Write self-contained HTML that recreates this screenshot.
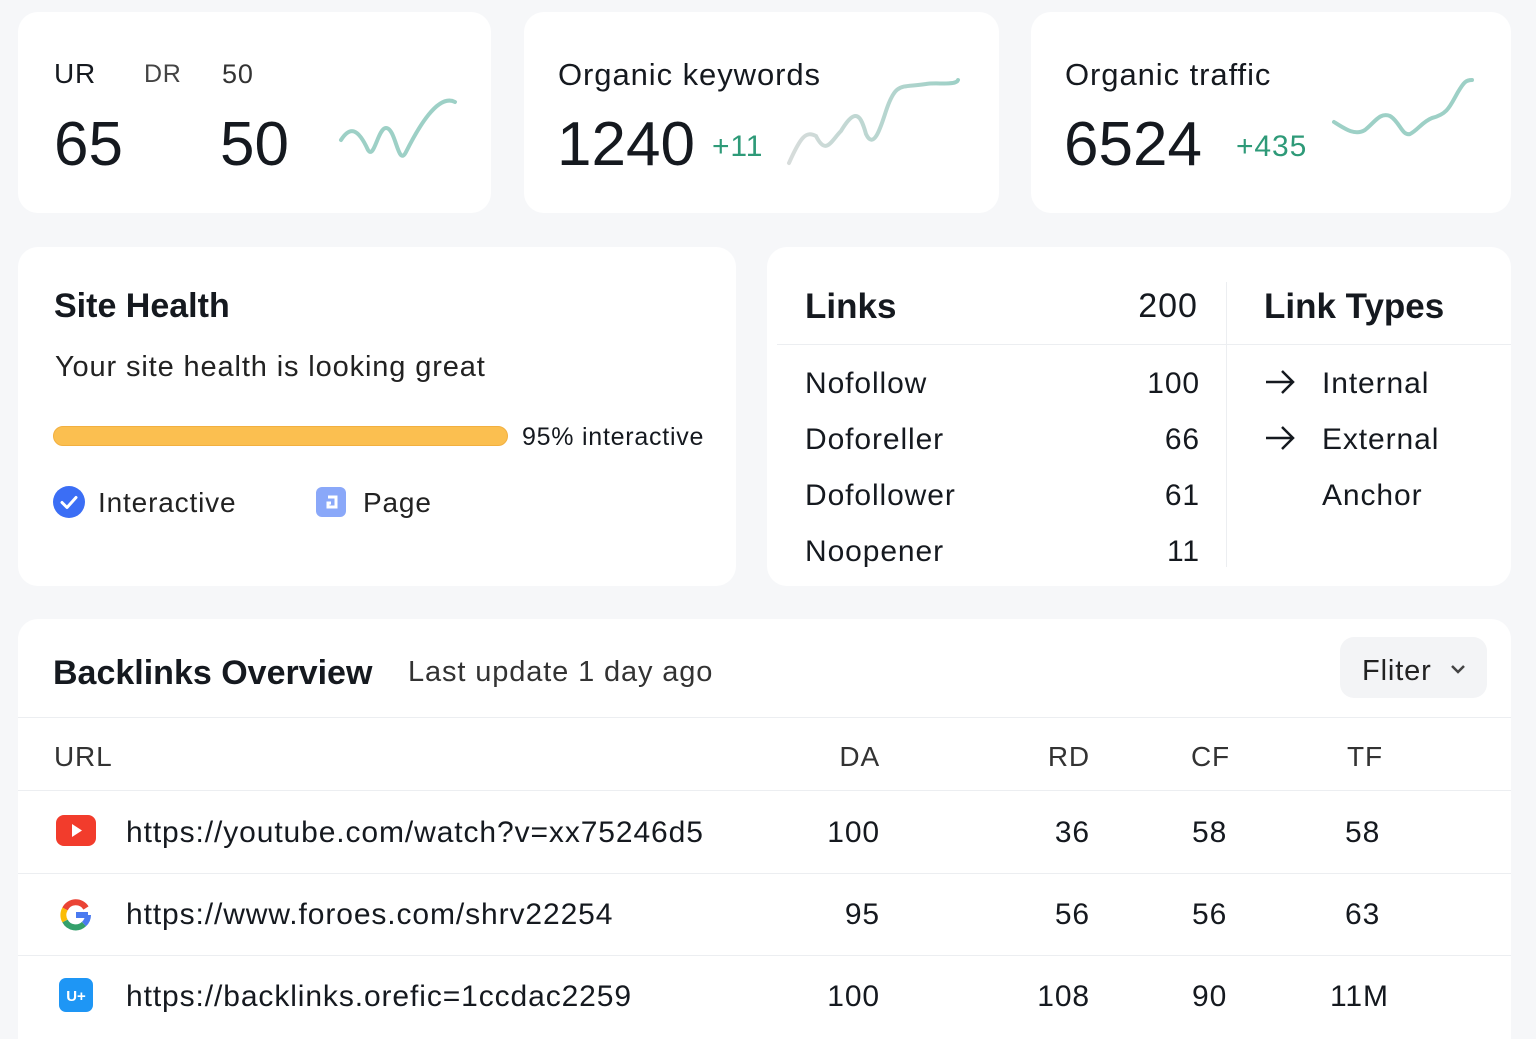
<!DOCTYPE html>
<html><head><meta charset="utf-8"><style>
*{margin:0;padding:0;box-sizing:border-box}
body{width:1536px;height:1024px;background:#f6f7f9;position:relative;overflow:hidden;font-family:"Liberation Sans",sans-serif;color:#15191f}
.card{position:absolute;background:#fff;border-radius:20px}
.t{position:absolute;line-height:1;white-space:nowrap;transform:translateY(3px);letter-spacing:0.03em}
.n{letter-spacing:0}
.b{font-weight:bold;letter-spacing:0}
.r{text-align:right}
.hl{position:absolute;height:1px;background:#eceef1}
</style></head><body>
<div class="card" style="left:18px;top:12px;width:473px;height:201px"></div>
<div class="card" style="left:524px;top:12px;width:475px;height:201px"></div>
<div class="card" style="left:1031px;top:12px;width:480px;height:201px"></div>
<div class="card" style="left:18px;top:247px;width:718px;height:339px"></div>
<div class="card" style="left:767px;top:247px;width:744px;height:339px"></div>
<div class="card" style="left:18px;top:619px;width:1493px;height:420px;border-radius:20px 20px 0 0"></div>

<div class="t" style="left:54px;top:57px;font-size:28px">UR</div>
<div class="t" style="left:144px;top:59px;font-size:25px;color:#444">DR</div>
<div class="t" style="left:222px;top:58px;font-size:27px;color:#333">50</div>
<div class="t n" style="left:54px;top:111px;font-size:62px">65</div>
<div class="t n" style="left:220px;top:111px;font-size:62px">50</div>
<svg style="position:absolute;left:338px;top:98px" width="122" height="64"><path d="M3 42 C12 28 20 30 30 52 C36 62 40 30 48 30 C58 30 60 70 68 54 C80 30 100 -5 117 4" fill="none" stroke="#9dd0c6" stroke-width="4" stroke-linecap="round"/></svg>

<div class="t" style="left:558px;top:56px;font-size:31px">Organic keywords</div>
<div class="t n" style="left:557px;top:111px;font-size:62px">1240</div>
<div class="t" style="left:712px;top:129px;font-size:30px;color:#2e9a78">+11</div>
<svg style="position:absolute;left:786px;top:76px" width="178" height="92"><defs><linearGradient id="g1" x1="0" x2="1"><stop offset="0" stop-color="#d7dcdb"/><stop offset="1" stop-color="#9dd0c6"/></linearGradient></defs><path d="M3 87 C15 60 20 55 30 60 C40 80 45 65 55 55 C70 30 75 40 80 58 C88 75 95 50 100 35 C110 5 115 12 140 8 C150 6 170 10 172 4" fill="none" stroke="url(#g1)" stroke-width="4" stroke-linecap="round"/></svg>

<div class="t" style="left:1065px;top:56px;font-size:31px">Organic traffic</div>
<div class="t n" style="left:1064px;top:111px;font-size:62px">6524</div>
<div class="t" style="left:1236px;top:129px;font-size:30px;color:#2e9a78">+435</div>
<svg style="position:absolute;left:1330px;top:74px" width="144" height="70"><path d="M4 48 C15 55 25 62 35 56 C45 48 50 38 60 42 C70 48 72 62 80 60 C88 56 92 48 102 44 C118 40 120 32 128 18 C134 8 136 6 142 6" fill="none" stroke="#9dd0c6" stroke-width="4" stroke-linecap="round"/></svg>

<div class="t b" style="left:54px;top:286px;font-size:34px">Site Health</div>
<div class="t" style="left:55px;top:350px;font-size:29px;color:#222">Your site health is looking great</div>
<div style="position:absolute;left:53px;top:426px;width:455px;height:20px;background:#fbbf50;border-radius:10px;border:1px solid #f2b040"></div>
<div class="t" style="left:522px;top:422px;font-size:25px">95% interactive</div>
<svg style="position:absolute;left:53px;top:486px" width="32" height="32"><circle cx="16" cy="16" r="16" fill="#3b6ef5"/><path d="M9 16.5l5 5 9-10" fill="none" stroke="#fff" stroke-width="3" stroke-linecap="round" stroke-linejoin="round"/></svg>
<div class="t" style="left:98px;top:486px;font-size:28px;color:#222">Interactive</div>
<svg style="position:absolute;left:316px;top:487px" width="30" height="30"><rect width="30" height="30" rx="6" fill="#8aa8f9"/><path d="M12 10h8v10h-8v-4h3" fill="none" stroke="#fff" stroke-width="3"/></svg>
<div class="t" style="left:363px;top:486px;font-size:28px;color:#222">Page</div>

<div class="t b" style="left:805px;top:286px;font-size:35px">Links</div>
<div class="t r" style="left:1098px;width:100px;top:286px;font-size:34px">200</div>
<div class="t b" style="left:1264px;top:286px;font-size:35px">Link Types</div>
<div class="hl" style="left:777px;top:344px;width:734px"></div>
<div style="position:absolute;left:1226px;top:282px;width:1px;height:285px;background:#eceef1"></div>
<div class="t" style="left:805px;top:366px;font-size:30px">Nofollow</div>
<div class="t" style="left:805px;top:422px;font-size:30px">Doforeller</div>
<div class="t" style="left:805px;top:478px;font-size:30px">Dofollower</div>
<div class="t" style="left:805px;top:534px;font-size:30px">Noopener</div>
<div class="t r" style="left:1100px;width:100px;top:366px;font-size:30px">100</div>
<div class="t r" style="left:1100px;width:100px;top:422px;font-size:30px">66</div>
<div class="t r" style="left:1100px;width:100px;top:478px;font-size:30px">61</div>
<div class="t r" style="left:1100px;width:100px;top:534px;font-size:30px">11</div>
<svg style="position:absolute;left:1264px;top:369px" width="32" height="26"><path d="M2 13h27M18 2l11 11-11 11" fill="none" stroke="#15191f" stroke-width="2.5"/></svg>
<svg style="position:absolute;left:1264px;top:425px" width="32" height="26"><path d="M2 13h27M18 2l11 11-11 11" fill="none" stroke="#15191f" stroke-width="2.5"/></svg>
<div class="t" style="left:1322px;top:366px;font-size:30px">Internal</div>
<div class="t" style="left:1322px;top:422px;font-size:30px">External</div>
<div class="t" style="left:1322px;top:478px;font-size:30px">Anchor</div>

<div class="t b" style="left:53px;top:653px;font-size:34px">Backlinks Overview</div>
<div class="t" style="left:408px;top:655px;font-size:29px;color:#333">Last update 1 day ago</div>
<div style="position:absolute;left:1340px;top:637px;width:147px;height:61px;background:#f3f4f6;border-radius:14px"></div>
<div class="t" style="left:1362px;top:654px;font-size:29px;color:#222">Fliter</div>
<svg style="position:absolute;left:1449px;top:662px" width="18" height="14"><path d="M3 4l6 6 6-6" fill="none" stroke="#444" stroke-width="2.5"/></svg>
<div class="hl" style="left:18px;top:717px;width:1493px"></div>
<div class="t" style="left:54px;top:740px;font-size:28px;color:#333">URL</div>
<div class="t r" style="left:780px;width:100px;top:740px;font-size:28px;color:#333">DA</div>
<div class="t r" style="left:990px;width:100px;top:740px;font-size:28px;color:#333">RD</div>
<div class="t" style="left:1191px;top:740px;font-size:28px;color:#333">CF</div>
<div class="t" style="left:1347px;top:740px;font-size:28px;color:#333">TF</div>
<div class="hl" style="left:18px;top:790px;width:1493px"></div>
<div class="hl" style="left:18px;top:873px;width:1493px"></div>
<div class="hl" style="left:18px;top:955px;width:1493px"></div>

<svg style="position:absolute;left:56px;top:815px" width="40" height="31"><rect width="40" height="31" rx="8" fill="#f23c2c"/><path d="M16 9l10 6.5-10 6.5z" fill="#fff"/></svg>
<svg style="position:absolute;left:59px;top:898px" width="34" height="34" viewBox="0 0 34 34"><path d="M29 17h-12" stroke="#4a7af0" stroke-width="6"/><path d="M27 10A12 12 0 0 0 6 11" fill="none" stroke="#ea4335" stroke-width="6"/><path d="M6 11A12 12 0 0 0 6 23" fill="none" stroke="#fbbc05" stroke-width="6"/><path d="M6 23A12 12 0 0 0 25 26" fill="none" stroke="#34a06b" stroke-width="6"/><path d="M25 26A12 12 0 0 0 29 17" fill="none" stroke="#4a7af0" stroke-width="6"/></svg>
<svg style="position:absolute;left:59px;top:978px" width="34" height="34"><rect width="34" height="34" rx="7" fill="#1e96f5"/><text x="17" y="23" font-family="Liberation Sans" font-weight="bold" font-size="15" fill="#fff" text-anchor="middle">U+</text></svg>

<div class="t" style="left:126px;top:815px;font-size:30px">https://youtube.com/watch?v=xx75246d5</div>
<div class="t" style="left:126px;top:897px;font-size:30px">https://www.foroes.com/shrv22254</div>
<div class="t" style="left:126px;top:979px;font-size:30px">https://backlinks.orefic=1ccdac2259</div>
<div class="t r" style="left:780px;width:100px;top:815px;font-size:30px">100</div>
<div class="t r" style="left:780px;width:100px;top:897px;font-size:30px">95</div>
<div class="t r" style="left:780px;width:100px;top:979px;font-size:30px">100</div>
<div class="t r" style="left:990px;width:100px;top:815px;font-size:30px">36</div>
<div class="t r" style="left:990px;width:100px;top:897px;font-size:30px">56</div>
<div class="t r" style="left:990px;width:100px;top:979px;font-size:30px">108</div>
<div class="t" style="left:1192px;top:815px;font-size:30px">58</div>
<div class="t" style="left:1192px;top:897px;font-size:30px">56</div>
<div class="t" style="left:1192px;top:979px;font-size:30px">90</div>
<div class="t" style="left:1345px;top:815px;font-size:30px">58</div>
<div class="t" style="left:1345px;top:897px;font-size:30px">63</div>
<div class="t" style="left:1330px;top:979px;font-size:30px">11M</div>
</body></html>
